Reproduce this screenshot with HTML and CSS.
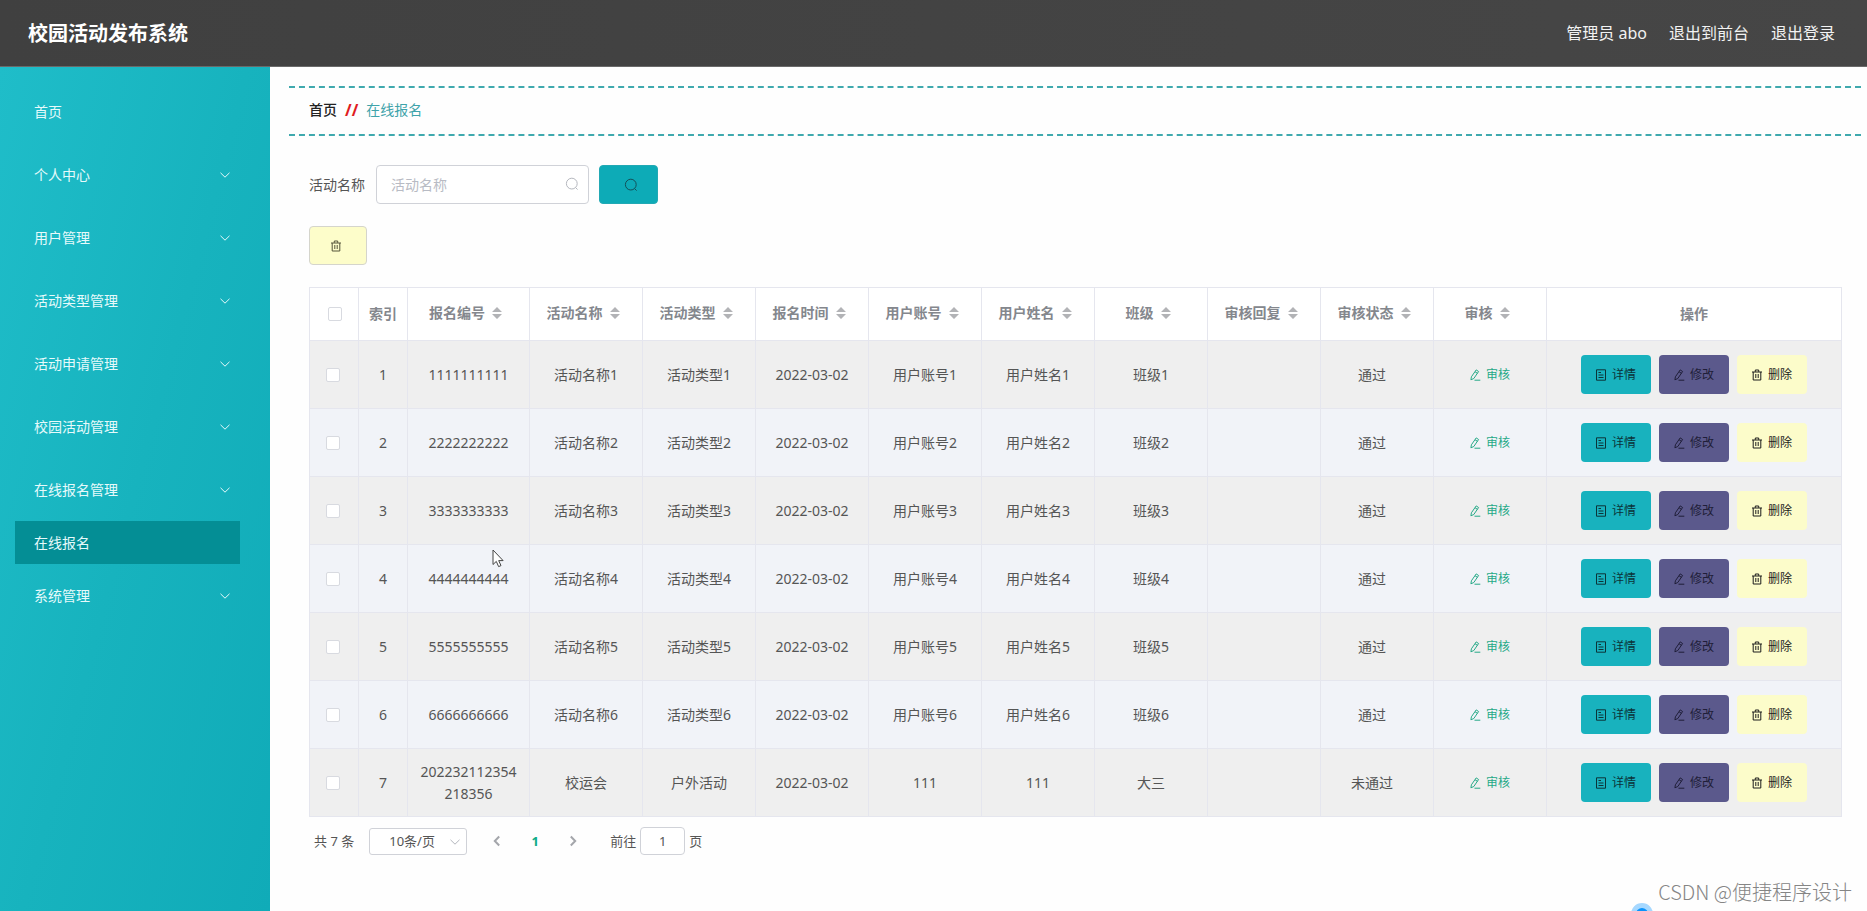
FILE: index.html
```html
<!DOCTYPE html>
<html lang="zh-CN">
<head>
<meta charset="utf-8">
<title>校园活动发布系统</title>
<link rel="stylesheet" href="styles.css">
</head>
<body>
<svg class="sprite" aria-hidden="true">
  <symbol id="i-down" viewBox="0 0 12 12"><path d="M1.5 3.8 6 8.2l4.500-4.400"/></symbol>
  <symbol id="i-left" viewBox="0 0 12 12"><path d="M8.200 1.500 3.800 6l4.400 4.500"/></symbol>
  <symbol id="i-right" viewBox="0 0 12 12"><path d="M3.800 1.500 8.200 6l-4.400 4.500"/></symbol>
  <symbol id="i-search" viewBox="0 0 14 14"><circle cx="6.800" cy="6.600" r="5.400"/><path d="m10.600 10.600 2 2"/></symbol>
  <symbol id="i-trash" viewBox="0 0 12 12"><path d="M1 3h10M2.200 3v8h7.600V3M4.300 2.800V1h3.400v1.800M4.800 5v4M7.200 5v4"/></symbol>
  <symbol id="i-edit" viewBox="0 0 12 12"><path d="m7.200.9 2.400 1.600-4.800 7-2.900 1.300.5-3zM6 2.700l2.400 1.600M5.500 11.200h5.800"/></symbol>
  <symbol id="i-doc" viewBox="0 0 12 12"><path d="M1.500.8h9v10.400h-9zM3.500 3.500h2.500M3.500 6h5M3.500 8.500h5"/></symbol>
  <symbol id="i-sort" viewBox="0 0 10 12"><path d="M5 0l5 5H0zM5 12l5-5H0z"/></symbol>
</svg>

<header class="topbar">
  <h1 class="brand">校园活动发布系统</h1>
  <nav class="topnav">
    <span>管理员 abo</span>
    <a href="#">退出到前台</a>
    <a href="#">退出登录</a>
  </nav>
</header>

<div class="shell">
  <nav class="sidebar">
    <a class="item" href="#">首页</a>
    <a class="item" href="#">个人中心<svg class="icon"><use href="#i-down"/></svg></a>
    <a class="item" href="#">用户管理<svg class="icon"><use href="#i-down"/></svg></a>
    <a class="item" href="#">活动类型管理<svg class="icon"><use href="#i-down"/></svg></a>
    <a class="item" href="#">活动申请管理<svg class="icon"><use href="#i-down"/></svg></a>
    <a class="item" href="#">校园活动管理<svg class="icon"><use href="#i-down"/></svg></a>
    <a class="item" href="#">在线报名管理<svg class="icon"><use href="#i-down"/></svg></a>
    <a class="item active" href="#">在线报名</a>
    <a class="item" href="#">系统管理<svg class="icon"><use href="#i-down"/></svg></a>
  </nav>

  <main class="main">
    <div class="crumbs"><a href="#">首页</a><span class="sep">//</span><span class="here">在线报名</span></div>

    <section class="content">
      <form class="search">
        <label for="q">活动名称</label>
        <div class="field">
          <input id="q" type="text" placeholder="活动名称">
          <svg class="icon"><use href="#i-search"/></svg>
        </div>
        <button class="btn-search" type="button" aria-label="查询"><svg class="icon"><use href="#i-search"/></svg></button>
      </form>
      <button class="btn-batch" type="button" aria-label="删除"><svg class="icon"><use href="#i-trash"/></svg></button>

      <table class="grid">
        <colgroup><col class="c-sm"><col class="c-sm"><col class="c-id"><col class="c"><col class="c"><col class="c"><col class="c"><col class="c"><col class="c"><col class="c"><col class="c"><col class="c"><col class="c-ops"></colgroup>
        <thead>
          <tr>
            <th class="check"><input type="checkbox" aria-label="全选"></th>
            <th>索引</th>
            <th><span class="sort">报名编号<svg><use href="#i-sort"/></svg></span></th>
            <th><span class="sort">活动名称<svg><use href="#i-sort"/></svg></span></th>
            <th><span class="sort">活动类型<svg><use href="#i-sort"/></svg></span></th>
            <th><span class="sort">报名时间<svg><use href="#i-sort"/></svg></span></th>
            <th><span class="sort">用户账号<svg><use href="#i-sort"/></svg></span></th>
            <th><span class="sort">用户姓名<svg><use href="#i-sort"/></svg></span></th>
            <th><span class="sort">班级<svg><use href="#i-sort"/></svg></span></th>
            <th><span class="sort">审核回复<svg><use href="#i-sort"/></svg></span></th>
            <th><span class="sort">审核状态<svg><use href="#i-sort"/></svg></span></th>
            <th><span class="sort">审核<svg><use href="#i-sort"/></svg></span></th>
            <th>操作</th>
          </tr>
        </thead>
        <tbody>
          <tr>
            <td class="check"><input type="checkbox" aria-label="选择 1"></td><td>1</td><td>1111111111</td><td>活动名称1</td><td>活动类型1</td><td>2022-03-02</td><td>用户账号1</td><td>用户姓名1</td><td>班级1</td><td></td><td class="status">通过</td>
            <td><button class="btn audit" type="button"><svg class="icon"><use href="#i-edit"/></svg>审核</button></td>
            <td><div class="ops"><button class="btn view" type="button"><svg class="icon"><use href="#i-doc"/></svg>详情</button><button class="btn edit" type="button"><svg class="icon"><use href="#i-edit"/></svg>修改</button><button class="btn del" type="button"><svg class="icon"><use href="#i-trash"/></svg>删除</button></div></td>
          </tr>
          <tr>
            <td class="check"><input type="checkbox" aria-label="选择 2"></td><td>2</td><td>2222222222</td><td>活动名称2</td><td>活动类型2</td><td>2022-03-02</td><td>用户账号2</td><td>用户姓名2</td><td>班级2</td><td></td><td class="status">通过</td>
            <td><button class="btn audit" type="button"><svg class="icon"><use href="#i-edit"/></svg>审核</button></td>
            <td><div class="ops"><button class="btn view" type="button"><svg class="icon"><use href="#i-doc"/></svg>详情</button><button class="btn edit" type="button"><svg class="icon"><use href="#i-edit"/></svg>修改</button><button class="btn del" type="button"><svg class="icon"><use href="#i-trash"/></svg>删除</button></div></td>
          </tr>
          <tr>
            <td class="check"><input type="checkbox" aria-label="选择 3"></td><td>3</td><td>3333333333</td><td>活动名称3</td><td>活动类型3</td><td>2022-03-02</td><td>用户账号3</td><td>用户姓名3</td><td>班级3</td><td></td><td class="status">通过</td>
            <td><button class="btn audit" type="button"><svg class="icon"><use href="#i-edit"/></svg>审核</button></td>
            <td><div class="ops"><button class="btn view" type="button"><svg class="icon"><use href="#i-doc"/></svg>详情</button><button class="btn edit" type="button"><svg class="icon"><use href="#i-edit"/></svg>修改</button><button class="btn del" type="button"><svg class="icon"><use href="#i-trash"/></svg>删除</button></div></td>
          </tr>
          <tr>
            <td class="check"><input type="checkbox" aria-label="选择 4"></td><td>4</td><td>4444444444</td><td>活动名称4</td><td>活动类型4</td><td>2022-03-02</td><td>用户账号4</td><td>用户姓名4</td><td>班级4</td><td></td><td class="status">通过</td>
            <td><button class="btn audit" type="button"><svg class="icon"><use href="#i-edit"/></svg>审核</button></td>
            <td><div class="ops"><button class="btn view" type="button"><svg class="icon"><use href="#i-doc"/></svg>详情</button><button class="btn edit" type="button"><svg class="icon"><use href="#i-edit"/></svg>修改</button><button class="btn del" type="button"><svg class="icon"><use href="#i-trash"/></svg>删除</button></div></td>
          </tr>
          <tr>
            <td class="check"><input type="checkbox" aria-label="选择 5"></td><td>5</td><td>5555555555</td><td>活动名称5</td><td>活动类型5</td><td>2022-03-02</td><td>用户账号5</td><td>用户姓名5</td><td>班级5</td><td></td><td class="status">通过</td>
            <td><button class="btn audit" type="button"><svg class="icon"><use href="#i-edit"/></svg>审核</button></td>
            <td><div class="ops"><button class="btn view" type="button"><svg class="icon"><use href="#i-doc"/></svg>详情</button><button class="btn edit" type="button"><svg class="icon"><use href="#i-edit"/></svg>修改</button><button class="btn del" type="button"><svg class="icon"><use href="#i-trash"/></svg>删除</button></div></td>
          </tr>
          <tr>
            <td class="check"><input type="checkbox" aria-label="选择 6"></td><td>6</td><td>6666666666</td><td>活动名称6</td><td>活动类型6</td><td>2022-03-02</td><td>用户账号6</td><td>用户姓名6</td><td>班级6</td><td></td><td class="status">通过</td>
            <td><button class="btn audit" type="button"><svg class="icon"><use href="#i-edit"/></svg>审核</button></td>
            <td><div class="ops"><button class="btn view" type="button"><svg class="icon"><use href="#i-doc"/></svg>详情</button><button class="btn edit" type="button"><svg class="icon"><use href="#i-edit"/></svg>修改</button><button class="btn del" type="button"><svg class="icon"><use href="#i-trash"/></svg>删除</button></div></td>
          </tr>
          <tr>
            <td class="check"><input type="checkbox" aria-label="选择 7"></td><td>7</td><td>202232112354218356</td><td>校运会</td><td>户外活动</td><td>2022-03-02</td><td>111</td><td>111</td><td>大三</td><td></td><td class="status">未通过</td>
            <td><button class="btn audit" type="button"><svg class="icon"><use href="#i-edit"/></svg>审核</button></td>
            <td><div class="ops"><button class="btn view" type="button"><svg class="icon"><use href="#i-doc"/></svg>详情</button><button class="btn edit" type="button"><svg class="icon"><use href="#i-edit"/></svg>修改</button><button class="btn del" type="button"><svg class="icon"><use href="#i-trash"/></svg>删除</button></div></td>
          </tr>
        </tbody>
      </table>

      <div class="pager">
        <span>共 7 条</span>
        <div class="size">
          <select aria-label="每页条数"><option>10条/页</option></select>
          <svg class="icon"><use href="#i-down"/></svg>
        </div>
        <div class="pages">
          <button type="button" aria-label="上一页"><svg class="icon"><use href="#i-left"/></svg></button>
          <button class="current" type="button">1</button>
          <button type="button" aria-label="下一页"><svg class="icon"><use href="#i-right"/></svg></button>
        </div>
        <label class="jump">前往<input type="text" value="1">页</label>
      </div>
    </section>
  </main>
</div>

<svg class="pointer" viewBox="0 0 12 19" aria-hidden="true"><path d="M1 1v14.500l3.300-3.100 2.300 5.200 2.400-1-2.300-5h4.400z"/></svg>
<span class="bubble"></span>
<span class="watermark">CSDN @便捷程序设计</span>
</body>
</html>
```

FILE: styles.css
```css
* { box-sizing: border-box; }

body {
  margin: 0;
  min-height: 100vh;
  display: flex;
  flex-direction: column;
  position: relative;
  overflow: hidden;
  background: #fefefe;
  color: #555;
  font: 14px/22px "Noto Sans", "Noto Sans CJK SC", sans-serif;
}

a { color: inherit; text-decoration: none; }
button, input, select { font: inherit; color: inherit; margin: 0; }
button { cursor: pointer; }

.sprite { position: absolute; width: 0; height: 0; }
.icon {
  width: 12px;
  height: 12px;
  flex: none;
  fill: none;
  stroke: currentColor;
  stroke-width: 1;
}

.topbar {
  height: 67px;
  padding: 0 32px 0 28px;
  display: flex;
  align-items: center;
  justify-content: space-between;
  background: linear-gradient(90deg, #404040, #464646);
  border-bottom: 1px solid #6a6a6a;
  color: #fff;
}
.brand { margin: 0; padding-top: 2px; font-size: 20px; line-height: 28px; }
.topnav { display: flex; gap: 22px; font-size: 16px; color: #f2f2f2; }

.shell { flex: 1; display: flex; }

.sidebar {
  width: 270px;
  flex: none;
  padding-top: 13px;
  background: linear-gradient(105deg, #1fbdc9, #17b3be 50%, #10abb8);
  color: #e6fafb;
}
.item {
  height: 63px;
  padding: 0 39px 0 34px;
  display: flex;
  align-items: center;
  justify-content: space-between;
}
.item.active {
  height: 43px;
  margin: 0 30px 0 15px;
  padding: 0 19px;
  background: #048e95;
}

.main { flex: 1; min-width: 0; padding: 19px 6px 0 19px; }
.crumbs {
  height: 50px;
  padding: 0 20px 2px;
  display: flex;
  align-items: center;
  border: 2px dashed #3fa9ae;
  border-width: 2px 0;
  color: #222;
}
.crumbs a { font-weight: 500; }
.sep { margin: 0 8px; font-size: 16px; color: #e01b22; font-weight: 700; }
.here { color: #3fa3aa; }

.content { padding: 29px 21px 29px 20px; }
.search { display: flex; align-items: center; }
.search label { margin-right: 11px; }
.field { position: relative; width: 213px; margin-right: 10px; }
.field input {
  display: block;
  width: 100%;
  height: 39px;
  padding: 0 14px;
  border: 1px solid #d0d2d8;
  border-radius: 4px;
  background: #fff;
}
.field input::placeholder { color: #b8bbc4; }
.field .icon { position: absolute; right: 10px; top: 12px; color: #b4b7be; }
.field .icon, .btn-search .icon { width: 14px; height: 14px; }
.btn-search {
  width: 59px;
  height: 39px;
  padding: 0 0 0 4px;
  border: 1px solid #22a9b4;
  border-radius: 4px;
  background: #0dabb7;
  color: #135058;
}
.btn-search .icon { display: block; margin: 0 auto; }
.btn-batch {
  width: 58px;
  height: 39px;
  margin: 22px 0;
  padding: 0 5px 0 0;
  display: flex;
  align-items: center;
  justify-content: center;
  border: 1px solid #d5d5cc;
  border-radius: 4px;
  background: #fdfdca;
  color: #55553a;
}

.grid {
  width: 100%;
  table-layout: fixed;
  border-collapse: collapse;
  text-align: center;
}
.c-sm { width: 49px; }
.c-id { width: 122px; }
.c { width: 113px; }
.c-ops { width: 295px; }
.grid th, .grid td {
  padding: 0 10px;
  border: 1px solid #e5e6ee;
  overflow-wrap: anywhere;
}
.grid th {
  height: 53px;
  padding: 0;
  background: #fff;
  color: #84878d;
}
.grid td { height: 68px; }
.grid tbody tr:nth-child(odd) { background: #efefef; }
.grid tbody tr:nth-child(even) { background: #f1f3f8; }
.grid .check { padding: 0 2px 0 0; }
.grid th.check { padding: 0 0 0 2px; }
.grid .status { padding-right: 20px; }
.check input {
  appearance: none;
  display: block;
  width: 14px;
  height: 14px;
  margin: 0 auto;
  border: 1px solid #d8dae0;
  border-radius: 2px;
  background: #fff;
}
.sort {
  display: flex;
  align-items: center;
  justify-content: center;
  gap: 7px;
  padding: 0 6px 3px 0;
}
.sort svg { width: 10px; height: 12px; fill: #b2b3b6; }

.ops { display: flex; justify-content: center; gap: 8px; }
.btn {
  height: 39px;
  padding: 0 15px 0 14px;
  display: inline-flex;
  align-items: center;
  justify-content: center;
  gap: 5px;
  border: 0;
  border-radius: 4px;
  font-size: 12px;
  line-height: 20px;
  color: #1c1c1c;
  vertical-align: middle;
}
.grid td .btn { white-space: nowrap; }
.audit { background: none; color: #25a987; }
.view { background: #18b2be; color: #0c3438; }
.edit { background: #5b598c; color: #1f1e38; }
.del { background: #fcfcca; }

.pager {
  display: flex;
  align-items: center;
  margin-top: 10px;
  padding-left: 5px;
  font-size: 13px;
}
.size { position: relative; width: 98px; margin: 0 19px 0 15px; }
.size select {
  appearance: none;
  display: block;
  width: 100%;
  height: 27px;
  padding: 0 0 0 19px;
  border: 1px solid #d0d2d8;
  border-radius: 3px;
  background: #fff;
}
.size .icon { position: absolute; right: 6px; top: 8px; color: #b4b7be; pointer-events: none; }
.pages { display: flex; gap: 16px; }
.pages button {
  width: 22px;
  height: 27px;
  padding: 0;
  border: 0;
  background: none;
  color: #a4a6ab;
}
.pages .icon { display: block; margin: 0 auto; stroke-width: 2; }
.pages .current { color: #0eab86; font-weight: 700; }
.jump { display: flex; align-items: center; margin-left: 26px; }
.jump input {
  width: 45px;
  height: 28px;
  margin: 0 4px;
  padding: 0;
  border: 1px solid #d0d2d8;
  border-radius: 4px;
  background: #fff;
  text-align: center;
}

.pointer {
  position: absolute;
  left: 492px;
  top: 549px;
  width: 12px;
  height: 19px;
  fill: #fff;
  stroke: #444;
}
.bubble {
  position: absolute;
  right: 214px;
  bottom: -14px;
  width: 22px;
  height: 22px;
  border: 5px solid #a6d8ff;
  border-radius: 50%;
  background: #0b93fb;
}
.watermark {
  position: absolute;
  right: 15px;
  bottom: 5px;
  font: 300 20px/28px "Noto Sans CJK SC", sans-serif;
  color: #858585;
}
```
